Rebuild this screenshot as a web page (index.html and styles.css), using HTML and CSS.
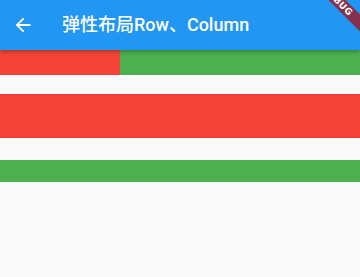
FILE: index.html
```html
<!DOCTYPE html>
<html lang="zh-CN">
<head>
    <meta charset="UTF-8">
    <meta name="viewport" content="width=device-width, initial-scale=1.0">
    <title>弹性布局Row、Column</title>
    <link rel="stylesheet" href="styles.css">
</head>
<body>

    <header class="app-bar">
        <span class="back">
            <svg viewBox="0 0 24 24" width="22" height="22">
                <path d="M20 11H7.83l5.59-5.59L12 4l-8 8 8 8 1.41-1.41L7.83 13H20v-2z" fill="#fff"/>
            </svg>
        </span>
        <h1 class="title">弹性布局Row、Column</h1>
    </header>

    <div class="row">
        <div class="cell red flex1"></div>
        <div class="cell green flex2"></div>
    </div>

    <div class="block red big"></div>
    <div class="block green small"></div>

    <!-- debug banner -->
    <div class="banner">DEBUG</div>

</body>
</html>
```

FILE: styles.css
```css
html, body {
    margin: 0;
    padding: 0;
}
body {
    width: 360px;
    height: 277px;
    overflow: hidden;
    position: relative;
    background-color: #fafafa;
    font-family: Roboto, "Noto Sans CJK SC", sans-serif;
}

.app-bar {
    position: relative;
    z-index: 2;
    height: 50px;
    display: flex;
    align-items: center;
    background-color: #2196f3;
    box-shadow: 0 2px 4px rgba(0, 0, 0, 0.25);
}
.back {
    width: 22px;
    height: 22px;
    margin-left: 12px;
    margin-top: -1px;
}
.back svg {
    display: block;
}
.title {
    margin: 0 0 0 28px;
    color: #fff;
    font-size: 18px;
    font-weight: 500;
    line-height: 22px;
}

.row {
    display: flex;
    height: 25px;
}
.flex1 { flex: 1; }
.flex2 { flex: 2; }

.red { background-color: #f44336; }
.green { background-color: #4caf50; }

.big {
    height: 44px;
    margin-top: 19px;
}
.small {
    height: 22px;
    margin-top: 22px;
}

.banner {
    position: absolute;
    z-index: 5;
    left: 278px;
    top: -5px;
    width: 120px;
    height: 12px;
    line-height: 12px;
    transform: rotate(45deg);
    background-color: #86304e;
    color: #fff;
    font-family: "DejaVu Sans", sans-serif;
    font-size: 9px;
    font-weight: 900;
    text-align: center;
    letter-spacing: 0.5px;
}
```
